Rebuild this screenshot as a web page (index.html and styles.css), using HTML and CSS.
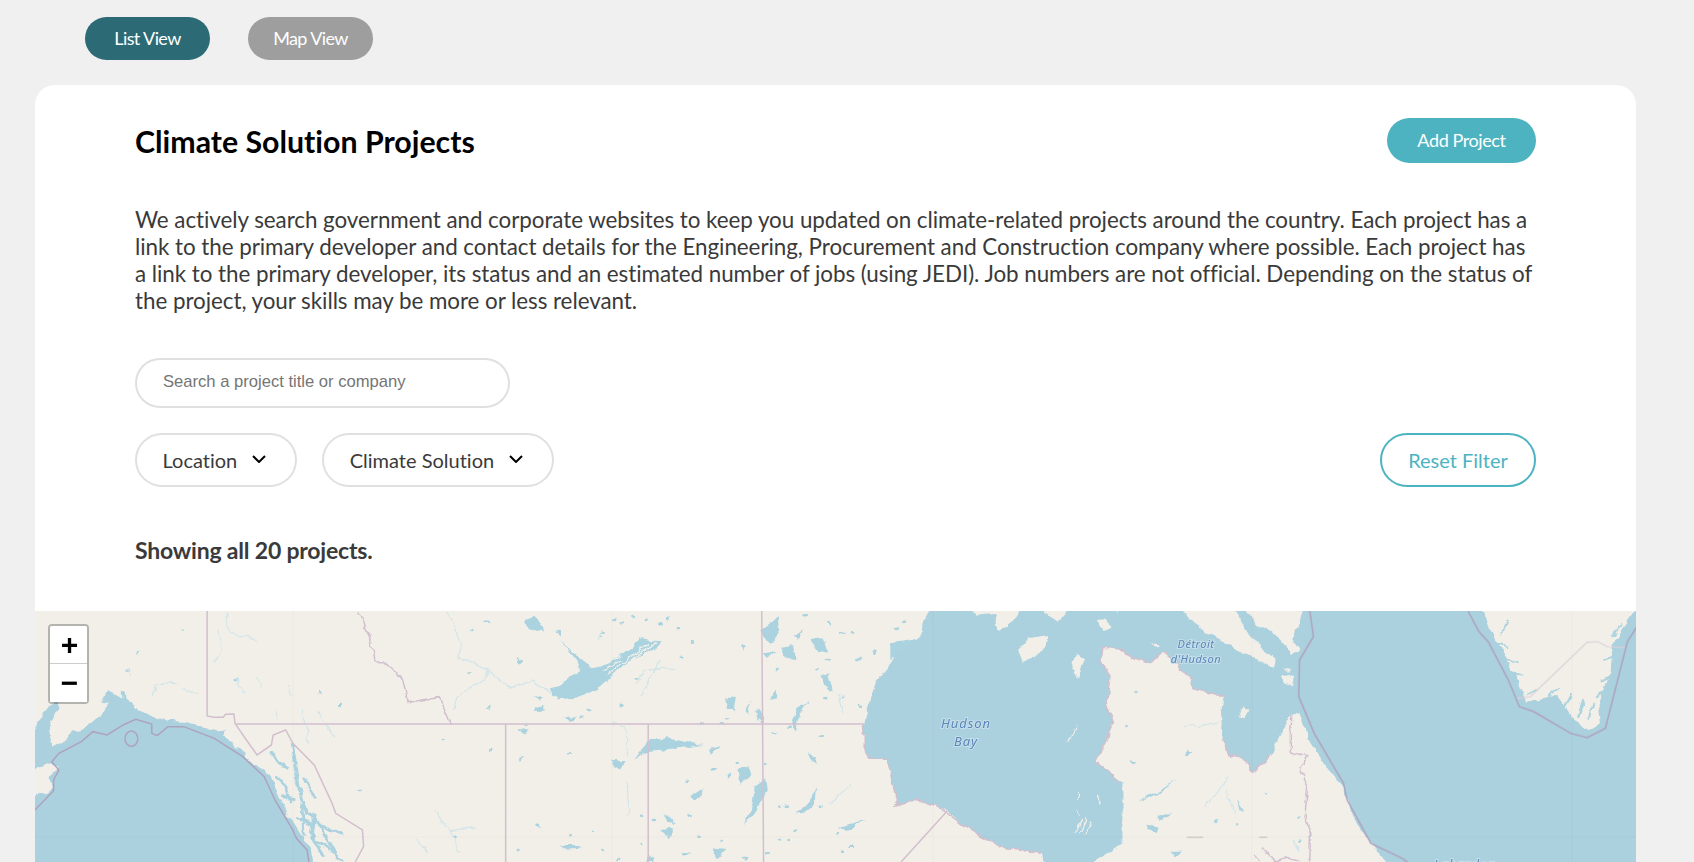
FILE: index.html
```html
<!DOCTYPE html>
<html lang="en">
<head>
<meta charset="utf-8">
<title>Climate Solution Projects</title>
<link rel="stylesheet" href="styles.css">
</head>
<body>
<nav class="tabs">
  <button class="tab tab-active">List View</button>
  <button class="tab tab-muted">Map View</button>
</nav>
<main class="card">
  <div class="card-body">
    <header class="head">
      <h1 class="title">Climate Solution Projects</h1>
      <button class="add">Add Project</button>
    </header>
    <p class="intro">We actively search government and corporate websites to keep you updated on climate-related projects around the country. Each project has a link to the primary developer and contact details for the Engineering, Procurement and Construction company where possible. Each project has a link to the primary developer, its status and an estimated number of jobs (using JEDI). Job numbers are not official. Depending on the status of the project, your skills may be more or less relevant.</p>
    <input class="search" type="text" placeholder="Search a project title or company">
    <div class="filters">
      <div class="drops">
        <button class="drop">Location
          <svg class="chev" viewBox="0 0 14 8" width="14" height="8"><path d="M1 1l6 6 6-6"/></svg>
        </button>
        <button class="drop">Climate Solution
          <svg class="chev" viewBox="0 0 14 8" width="14" height="8"><path d="M1 1l6 6 6-6"/></svg>
        </button>
      </div>
      <button class="reset">Reset Filter</button>
    </div>
    <p class="count">Showing all 20 projects.</p>
  </div>
  <section class="map">
    <svg class="map-art" viewBox="35 611 1601 251" width="1601" height="251">
      <defs>
        <filter id="soft" x="-2%" y="-2%" width="104%" height="104%"><feGaussianBlur stdDeviation="0.5"/></filter>
        <filter id="rough" x="-2%" y="-2%" width="104%" height="104%">
          <feTurbulence type="fractalNoise" baseFrequency="0.09" numOctaves="3" seed="4" result="n"/>
          <feDisplacementMap in="SourceGraphic" in2="n" scale="7" xChannelSelector="R" yChannelSelector="G"/>
          <feGaussianBlur stdDeviation="0.5"/>
        </filter>
      </defs>
      <rect class="land" x="35" y="611" width="1601" height="251"/>
      <g filter="url(#rough)">
        <!-- west: Alaska, Yukon, BC -->
        <g transform="translate(0 600) scale(.3571 .3333)">
          <path class="water" d="M90 800V595L130 575 150 550 135 530 165 500 135 490 90 515V400L118 345 140 315 165 303 160 330 145 360 135 395 145 440 180 420 200 400 235 385 255 372 290 340 305 310 285 305 300 270 330 285 375 315 385 330 415 345 440 350 470 362 520 366 565 378 610 395 635 385 625 410 650 430 690 470 720 495 745 515 770 560 790 610 810 650 840 700 870 750 880 800Z"/>
          <path class="fjord" d="M760 455 780 490 805 505M815 430 830 520 845 600 860 640 900 680 945 770M845 610 852 710M880 640 872 700 905 770M850 530 882 595M830 650 872 672M770 530 800 560 815 610M300 330 340 300M345 270 350 320M870 710 930 750 960 786M790 590 830 600M900 680 960 700"/>
          <path class="lake" d="M1470 65 1495 48 1525 90 1500 96 1480 85ZM1555 95 1568 92V110ZM1360 325 1375 315 1372 330ZM1500 320 1525 315 1525 332 1495 332ZM1495 285 1520 292 1510 302ZM1540 265 1568 258V295L1550 285ZM1445 170 1465 180 1450 188ZM1450 388 1478 395 1470 405ZM1450 470 1470 468 1452 480Z"/>
          <path class="speck" d="M510 95h2M1320 90h3M1310 215h2M1360 65h8M950 315h2M895 280h2M1240 420h2M1370 450h3M1005 570h2M1505 675h3M1270 710h3M1450 750h2M360 210h3M385 160h2M660 240h3M1470 380h2"/>
          <path class="river" d="M610 90 620 150 602 185M635 40 640 95 720 122M662 235 682 280M718 232 738 265M808 252 816 288M1255 33 1290 130 1285 175 1370 210 1385 230 1430 265 1490 240 1540 275M1370 210 1360 240 1280 290 1270 330M890 335 935 410M845 325 860 380 865 435M770 330 778 360M360 200 365 225M510 270 555 285M425 290 440 250 500 255M1220 630 1260 700 1290 755M1260 695 1330 685M1170 720 1195 760"/>
          <path class="border" d="M1005 33 1020 70 1045 150 1050 185 1075 185 1130 240 1145 305 1230 293 1262 372"/>
        </g>
        <!-- centre: lakes, Hudson Bay -->
        <g transform="translate(560 600) scale(.3571 .3333)">
          <path class="water" d="M1040 25 1015 70 1012 110 960 130 920 200 885 245 865 310 852 372 852 450 868 478 915 478 930 530 945 600 938 618 1000 598 1060 620 1085 632 1135 680 1200 720 1250 750 1350 760 1355 800H1480L1575 730V545L1500 485 1530 420 1550 370 1530 310 1540 230 1515 180 1520 145 1575 150V25Z"/>
          <path class="land" d="M1155 25 1165 50 1215 45 1225 92 1255 80 1290 25ZM1340 25 1395 62 1425 25ZM1285 155 1310 115 1365 105 1360 140 1320 180 1295 185ZM1432 190 1450 160 1470 175 1450 235ZM1500 60 1530 58 1542 85 1525 96ZM1550 25 1575 52V25Z"/>
          <path class="islet" d="M1445 625 1450 650M1440 700 1462 660M1455 700 1475 655M1470 700 1490 665M1448 575 1450 600M1505 585 1510 610M1420 425 1445 380"/>
          <path class="lake" d="M-5 120 50 170 90 205 130 195 190 150 230 115 285 125 260 150 190 182 130 245 100 272 60 292 -5 298 -5 262 30 230 60 210 30 160ZM205 482 250 420 300 415 400 435 330 445 250 452ZM150 480 180 480 170 512 150 500ZM415 445 445 435 420 465ZM540 610 545 560 578 535 582 570 550 640 515 672ZM560 90 610 55 615 100 590 135ZM565 160 610 155 580 178ZM505 135 525 135 515 152ZM655 110 680 90 670 120ZM705 120 735 115 752 155 720 150ZM625 140 650 135 660 185 625 165ZM10 355 45 342 30 360ZM500 510 530 495 535 520 505 555ZM365 590 400 565 395 590 375 600ZM280 690 320 685 310 715ZM425 745 470 750 440 775ZM0 735 55 735 50 745 10 745ZM660 640 700 600 720 565 715 610 680 640ZM650 370 665 320 700 300 670 340 660 395ZM520 335 540 295 525 340ZM545 335 555 320 570 370 550 360ZM585 300 605 265 605 295ZM465 290 495 290 490 330 470 330ZM690 460 720 470 715 495ZM290 635 325 670 300 665ZM245 775 265 770 260 786H245ZM505 775 535 770 520 786ZM780 680 855 660 800 690ZM730 230 750 220 765 275 740 250ZM925 130 1000 120 960 150 925 180Z"/>
          <path class="islet" d="M135 225 190 175 250 130M150 235 210 170 270 128M120 215 170 180"/>
          <path class="speck" d="M150 55h5M170 70h6M200 45h4M240 60h4M275 70h5M300 60h4M330 85h3M120 95h2M115 110h2M372 130h3M340 170h5M215 235h2M170 315h3M80 330h2M60 350h3M395 370h6M450 370h5M465 355h3M600 400h3M640 380h6M730 410h3M700 470h2M430 505h4M495 485h3M470 525h3M575 490h3M360 545h3M260 660h3M30 705h3M90 690h2M115 750h4M225 735h3M350 760h6M360 645h3M385 710h3M615 620h3M635 620h3M660 690h3M730 620h2M780 700h3M810 740h8M790 755h5M750 180h3M790 290h3M740 295h3M840 320h3M830 180h12M880 155h6M790 100h3M815 100h6M750 70h3M685 40h6M960 65h6M940 90h3M720 205h2M610 210h2M640 720h4M610 720h3M580 760h6M450 720h4M160 780h6M230 650h3M25 460h3"/>
          <path class="river" d="M215 250 240 205 320 205M150 370 180 380 190 470M185 540 190 650M820 550 760 610M120 85 110 120M225 290 280 180M780 280 790 340"/>
          <path class="border" d="M852 372V450L868 478 915 478 930 530 945 600 938 618 1000 598 1060 620 1135 680 1200 720 1250 750 1350 760M1568 150 1520 145 1515 180 1540 230 1530 310 1550 370 1530 420 1500 485 1568 545"/>
        </g>
        <!-- east: Hudson Strait, Labrador Sea, Greenland -->
        <g transform="translate(1120 600) scale(.3663 .3333)">
          <path class="water" d="M-6 25V150L40 175 80 185 120 155 160 190 165 210 200 235 200 265 260 285 285 285 275 320 280 420 295 465 330 470 360 515 410 470 445 385 470 340 490 340 520 430 570 510 610 560 620 600 650 680 700 745 735 800H1420V25Z"/>
          <path class="water" d="M-6 570 10 620-6 695Z"/>
          <path class="land" d="M165 25 200 70 240 100 290 130 350 165 420 207 425 178 360 120 310 25ZM340 25 370 70 430 110 470 162 490 150 470 120 490 70 500 25ZM445 225 470 230 470 256 445 245ZM450 205 465 210 465 220ZM325 352 335 320 350 335 340 355ZM88 130 110 135 95 140Z"/>
          <path class="land" d="M985 25 1010 80 1040 150 1060 190 1085 240 1112 305 1150 295 1200 285 1230 350 1280 390 1310 370 1305 320 1340 210 1345 130 1370 90 1405 40V25Z"/>
          <path class="fjord-thin" d="M1030 130 1060 140M1045 175 1085 190M1065 215 1100 225M1115 285 1140 270M1170 290 1200 265M1215 320 1235 280M1250 350 1265 300M1280 360 1290 310M1300 290 1330 270M1310 240 1340 230M1320 180 1345 170M1340 110 1370 70M1060 60 1040 100"/>
          <path class="lake" d="M75 670 105 680 100 698 80 690ZM100 650 140 645 110 665ZM50 605 160 540 90 590ZM85 410 135 435 105 420ZM135 755 175 755 150 775ZM320 600 340 635 325 625ZM20 480 50 485 30 490ZM185 450 195 465 180 465Z"/>
          <path class="speck" d="M40 280h2M15 375h3M395 580h3M260 665h3M320 670h3M490 725h4M520 705h3M485 650h2M390 270h1"/>
          <path class="river" d="M170 380 270 370M290 570 320 650M230 620 300 530M470 720 490 750"/>
          <path class="border" d="M0 150 40 175 80 185 120 155 160 190 165 210 200 235 200 265 260 285 285 285M280 420 295 465 330 470 360 515 410 470M470 340 465 400 465 455 510 470 490 510 512 560 505 650 520 700 518 786M390 745 420 786 455 775 490 786M365 765 385 786"/>
        </g>
      </g>
      <g filter="url(#soft)">
        <g transform="translate(0 600) scale(.3571 .3333)">
          <path class="border" d="M580 33V348L600 352 625 352 632 343 655 342 658 370 690 420 720 465 760 435 765 405 800 390 820 430 880 495 930 610 940 640 1015 690 1018 740 995 786M660 372H1568M1416 372V786"/>
          <path class="sea-line" d="M98 630 150 572 150 540 165 510 145 485 165 460 228 425 260 395 300 405 345 375 380 358 425 372 425 400 440 407 470 380 515 380 600 415 680 470 740 530 770 600 820 690 830 715 860 750 865 786"/>
          <ellipse class="sea-line" cx="368" cy="416" rx="18" ry="23"/>
        </g>
        <g transform="translate(560 600) scale(.3571 .3333)">
          <path class="border" d="M565 33 570 786M247 372V786M0 372H852M1085 632 955 786"/>
        </g>
        <g transform="translate(1120 600) scale(.3663 .3333)">
          <path class="border thin" d="M1120 290 1275 127 1305 125 1330 140 1380 143M1085 295 1120 290"/>
          <path class="sea-line" d="M518 33 528 110 490 180 488 290 530 400 610 550 620 600 685 730 770 775 785 786M950 33 980 95 1005 125 1060 240 1090 320 1130 335 1230 400 1275 413 1325 385 1385 125 1411 80"/>
          <path class="seam" d="M183 712H227M380 712H402"/>
        </g>
      </g>
      <path class="tile" d="M35 837H1636M293 611V862M612 611V862M933 611V862M1252 611V862M1572 611V862"/>
      <text class="label" x="966" y="728">Hudson</text>
      <text class="label" x="966" y="746">Bay</text>
      <text class="label small" x="1196" y="648">Détroit</text>
      <text class="label small" x="1196" y="663">d'Hudson</text>
      <text class="label" x="1464" y="869">Labrador</text>
    </svg>
    <div class="zoom">
      <button class="zoom-btn zoom-in">+</button>
      <button class="zoom-btn">−</button>
    </div>
  </section>
</main>
</body>
</html>
```
FILE: styles.css
```css
* { box-sizing: border-box; }
html, body { height: 100%; }
body {
  margin: 0;
  height: 862px;
  overflow: hidden;
  background: #f0f0f0;
  font-family: Lato, "Liberation Sans", sans-serif;
  font-variant-ligatures: none;
  color: #3a3a3a;
}
button { font-family: inherit; font-variant-ligatures: none; cursor: pointer; }

.tabs {
  display: flex;
  gap: 38px;
  padding: 17px 0 25px 85px;
}
.tab {
  width: 125px;
  height: 43px;
  padding: 0 0 2px;
  border: 0;
  border-radius: 22px;
  color: #fff;
  font-size: 18px;
  letter-spacing: -0.6px;
}
.tab-active { background: #2c6b75; }
.tab-muted { background: #9e9e9e; }

.card {
  margin: 0 58px 0 35px;
  height: 777px;
  background: #fff;
  border-radius: 20px 20px 0 0;
  overflow: hidden;
}
.card-body { padding: 33px 100px 0; height: 526px; }

.head {
  display: flex;
  justify-content: space-between;
  align-items: center;
  height: 45px;
}
.title {
  margin: 0;
  font-size: 30.3px;
  line-height: 36px;
  font-weight: 700;
  color: #000;
}
.add {
  width: 149px;
  height: 45px;
  padding: 0 0 2px;
  border: 0;
  border-radius: 23px;
  background: #4db3c1;
  color: #fff;
  font-size: 18px;
  letter-spacing: -0.4px;
}

.intro {
  margin: 43px 0 44px;
  font-size: 22.4px;
  line-height: 27px;
  letter-spacing: -0.05px;
  color: #3a3a3a;
}

.search {
  display: block;
  width: 375px;
  height: 50px;
  padding: 0 26px 2px;
  border: 2px solid #e0e0e0;
  border-radius: 25px;
  outline: 0;
  font-family: "Liberation Sans", Arial, sans-serif;
  font-size: 16.6px;
}
.search::placeholder { color: #757575; opacity: 1; }

.filters {
  display: flex;
  justify-content: space-between;
  margin-top: 25px;
}
.drops { display: flex; gap: 25px; }
.drop {
  display: flex;
  align-items: center;
  gap: 15px;
  height: 54px;
  padding: 0 29px 0 25.5px;
  border: 2px solid #e0e0e0;
  border-radius: 27px;
  background: #fff;
  color: #3a3a3a;
  font-size: 20px;
  white-space: nowrap;
}
.chev { fill: none; stroke: #000; stroke-width: 2; margin-top: -2px; }
.reset {
  width: 156px;
  height: 54px;
  border: 2px solid #4db3c1;
  border-radius: 27px;
  background: #fff;
  color: #4db3c1;
  font-size: 20px;
}

.count {
  margin: 50px 0 0;
  font-size: 23px;
  line-height: 27px;
  font-weight: 700;
  letter-spacing: -0.2px;
  color: #3a3a3a;
}

.map { position: relative; height: 251px; overflow: hidden; }
.map-art { display: block; }
.land { fill: #f2efe9; }
.water { fill: #abd1df; }
.lake { fill: #abd3df; }
.fjord { fill: none; stroke: #abd3df; stroke-width: 3; stroke-linejoin: round; vector-effect: non-scaling-stroke; }
.fjord-thin { fill: none; stroke: #abd3df; stroke-width: 2; vector-effect: non-scaling-stroke; }
.islet { fill: none; stroke: #f2efe9; stroke-width: 1.4; vector-effect: non-scaling-stroke; }
.speck { fill: none; stroke: #abd3df; stroke-width: 2.5; stroke-linecap: round; vector-effect: non-scaling-stroke; }
.river { fill: none; stroke: #d3e5e8; stroke-width: 1.2; vector-effect: non-scaling-stroke; }
.border { fill: none; stroke: #d2bfce; stroke-width: 1.5; vector-effect: non-scaling-stroke; }
.border.thin { stroke: #dcd0d8; stroke-width: 1.2; }
.sea-line { fill: none; stroke: #aea3bc; stroke-width: 1.5; vector-effect: non-scaling-stroke; }
.seam { fill: none; stroke: #c0c0bc; stroke-width: 1; vector-effect: non-scaling-stroke; }
.tile { fill: none; stroke: #000; stroke-opacity: .025; stroke-width: 1; }
.label {
  font-family: "Noto Sans", sans-serif;
  font-style: italic;
  font-size: 13px;
  letter-spacing: .9px;
  text-anchor: middle;
  fill: #5f84b8;
  stroke: #c4e0ea;
  stroke-width: 2px;
  paint-order: stroke;
}
.label.small { font-size: 11px; letter-spacing: .5px; }

.zoom {
  position: absolute;
  left: 13px;
  top: 13px;
  width: 41px;
  border: 2px solid rgba(0, 0, 0, .25);
  border-radius: 4px;
  background-clip: padding-box;
}
.zoom-btn {
  display: block;
  width: 37px;
  height: 38px;
  padding: 0 0 0 2px;
  border: 0;
  background: #fff;
  color: #000;
  font-family: "Liberation Sans", sans-serif;
  font-size: 30px;
  font-weight: 700;
  line-height: 36px;
}
.zoom-in { border-bottom: 1px solid #ccc; border-radius: 2px 2px 0 0; }
```
